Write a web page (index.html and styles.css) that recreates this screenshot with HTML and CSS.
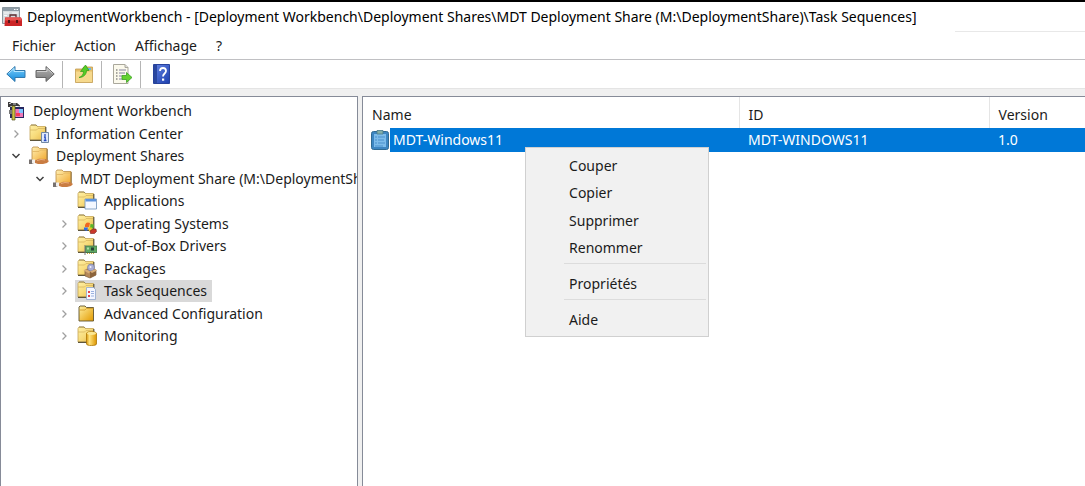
FILE: index.html
```html
<!DOCTYPE html>
<html lang="fr">
<head>
<meta charset="utf-8">
<title>DeploymentWorkbench</title>
<link rel="stylesheet" href="styles.css">
</head>
<body>
<svg class="defs" width="0" height="0" aria-hidden="true">
  <defs>
    <linearGradient id="gold" x1="0" y1="0" x2="1" y2="1"><stop offset="0" stop-color="#fff0a6"/><stop offset=".5" stop-color="#f8dc7c"/><stop offset="1" stop-color="#e8b84a"/></linearGradient>
    <linearGradient id="deep" x1="0" y1="0" x2="1" y2="1"><stop offset="0" stop-color="#fff0a0"/><stop offset="1" stop-color="#e39a00"/></linearGradient>
    <linearGradient id="amber" x1="0" y1="0" x2="1" y2="1"><stop offset="0" stop-color="#fff0b4"/><stop offset="1" stop-color="#f0a62c"/></linearGradient>
    <linearGradient id="barrel" x1="0" y1="0" x2="1" y2="0"><stop offset="0" stop-color="#d99a10"/><stop offset=".3" stop-color="#ffe27c"/><stop offset="1" stop-color="#dc9500"/></linearGradient>
    <linearGradient id="sky" x1="0" y1="0" x2="0" y2="1"><stop offset="0" stop-color="#7fd0fa"/><stop offset="1" stop-color="#1088dc"/></linearGradient>
    <linearGradient id="steel" x1="0" y1="0" x2="0" y2="1"><stop offset="0" stop-color="#b4b4b4"/><stop offset="1" stop-color="#777"/></linearGradient>
    <linearGradient id="blue" x1="0" y1="0" x2="1" y2="1"><stop offset="0" stop-color="#6484e4"/><stop offset="1" stop-color="#1c3fae"/></linearGradient>
    <symbol id="folder" viewBox="0 0 20 20"><path d="M1 2.500L2 1h5l1.500 1.500h8V16H1z" fill="url(#gold)" stroke="#c5a555" stroke-width=".8"/><path d="M1 6h6.500L9 4.500h7.500" fill="none" stroke="#d8b661" stroke-width=".8"/><path d="M16.800 3v13.300H1" fill="none" stroke="#5e563c" stroke-width="1.200"/><path d="M2 1h5l1.500 1.300" fill="none" stroke="#8b7b4c" stroke-width=".8"/></symbol>
    <symbol id="share" viewBox="0 0 20 20"><path d="M3 2.500L4 1h5l1.500 1.500H18V15H3z" fill="url(#amber)" stroke="#b98b45" stroke-width=".8"/><path d="M3.500 5.500H10L11.500 4H17.500" fill="none" stroke="#dfb35d" stroke-width=".8"/><path d="M18.200 3v11" stroke="#8e7042"/><path d="M0 13.500h3.500l1.500 3-1 1.500H0z" fill="#77716f"/><path d="M3 13.500h3l1 2.500-2 1.500H3z" fill="#f2efec"/><path d="M6 14.500l4-1.700 7 .2 3 2-2 2-4 1H9l-3-1z" fill="#c97c42"/><path d="M8 14.500l4-1 4 .5" fill="none" stroke="#e9af7c"/></symbol>
    <symbol id="chev-right" viewBox="0 0 10 10"><path d="M3.500 1.500L7 5 3.500 8.500" fill="none" stroke="#a0a0a0" stroke-width="1.300"/></symbol>
    <symbol id="chev-down" viewBox="0 0 10 10"><path d="M1.500 3L5 6.500 8.500 3" fill="none" stroke="#404040" stroke-width="1.500"/></symbol>
  </defs>
</svg>
<div class="window">
  <header class="titlebar">
    <svg class="icon20" viewBox="0 0 20 20" aria-hidden="true"><path d="M.500.500h17v16H.500z" fill="#d5dbde" stroke="#8b979e"/><path d="M1 1h16v3H1z" fill="#8e9ca6"/><path d="M12 2.500h1.500M14.500 2.500H16" stroke="#fff"/><path d="M2 6h5M2 8.500h3M10 6h6" stroke="#f8fafb"/><path d="M8 10.500V8h6v2.500" fill="none" stroke="#5b2c2e" stroke-width="1.300"/><path d="M3 10.500h16l1 2v6.500H2.500z" fill="#cb2426"/><path d="M3.500 10.500h15.500l.5 3H3z" fill="#e85550"/><path d="M6 13h2v3H6zM14 13h2v3h-2z" fill="#571417"/></svg>
    <h1 class="title">DeploymentWorkbench - [Deployment Workbench\Deployment Shares\MDT Deployment Share (M:\DeploymentShare)\Task Sequences]</h1>
  </header>
  <nav class="menubar" aria-label="Menu">
    <button type="button">Fichier</button>
    <button type="button">Action</button>
    <button type="button">Affichage</button>
    <button type="button">?</button>
    <span class="menubar-line"></span>
  </nav>
  <div class="toolbar" role="toolbar">
    <button type="button" aria-label="Précédent"><svg class="icon20" viewBox="0 0 20 20"><path d="M.800 10L9 2.500v4h10v7H9v4z" fill="url(#sky)" stroke="#3279ad" stroke-linejoin="round"/><path d="M2.500 9.500L8 4.500v3h10" fill="none" stroke="#b5e6ff"/></svg></button>
    <button type="button" aria-label="Suivant"><svg class="icon20" viewBox="0 0 20 20"><path d="M19.200 10L11 2.500v4H1v7h10v4z" fill="url(#steel)" stroke="#666" stroke-linejoin="round"/><path d="M2 7.500h10v-3l5.500 5" fill="none" stroke="#cfcfcf"/></svg></button>
    <span class="divider"></span>
    <button type="button" aria-label="Dossier parent"><svg class="icon20" viewBox="0 0 20 20"><path d="M1.500 5h7l1-2h9v15.500h-17z" fill="#e6bf69" stroke="#c39d52" stroke-width=".8"/><path d="M2 7.500h16V18H2z" fill="#f6d98d"/><path d="M11 4h6v2h-6z" fill="#69b9e8"/><path d="M5 13.500c3-1 4.500-3 4.500-6H6.500L11.500 1 15 6.500h-2.500c0 4-3 7-7.500 7z" fill="#55cc27" stroke="#319b16" stroke-width=".7"/></svg></button>
    <span class="divider"></span>
    <button type="button" aria-label="Exporter la liste"><svg class="icon20" viewBox="0 0 20 20"><path d="M.500.500H12l3 3v16H.500z" fill="#fbf9ec" stroke="#aaa89c"/><path d="M12 .500v3h3" fill="#ddd" stroke="#aaa89c"/><path d="M3 6h1.500M3 9h1.500M3 12h1.500M3 15h1.500" stroke="#555"/><path d="M6 6h7M6 9h6M6 12h3M6 15h3" stroke="#8584a2"/><path d="M9 11.500h4.500V8.500l5.500 5-5.500 5v-3H9z" fill="#63d22f" stroke="#3aa023" stroke-width=".8"/></svg></button>
    <span class="divider"></span>
    <button type="button" aria-label="Aide"><svg class="icon20" viewBox="0 0 20 20"><path d="M1.500.500h16v19h-16z" fill="url(#blue)" stroke="#27429c"/><path d="M2 1h3v18H2z" fill="#2a479f"/><path d="M8 7C8 3 14 3 14 7c0 2.500-3 2.500-3 5.500" fill="none" stroke="#fff" stroke-width="1.800"/><path d="M10 14.500h2.200v2.200H10z" fill="#fff"/></svg></button>
  </div>
  <main class="panes">
    <section class="pane tree-pane">
      <ul class="tree">
        <li class="level0"><svg class="icon20" viewBox="0 0 20 20"><path d="M3 6h14v11H3z" fill="#26265f"/><path d="M8 8h8v8H8z" fill="#ef78b8"/><path d="M12 8h4v4h-4z" fill="#7dc5ff"/><path d="M9 12h4v3H9z" fill="#f63d5a"/><path d="M1 1h2l1 1h6l3 2.500v1L10 5H4L3 6H1z" fill="#3b3b3b"/><path d="M2 2.500h2M6 3h3" stroke="#ccc"/><path d="M5 5h3v14H5z" fill="#c9c243" stroke="#55521d" stroke-width=".7"/><path d="M2 9h3v4H2z" fill="#777"/></svg><span class="label">Deployment Workbench</span></li>
        <li class="level1"><button type="button" class="toggle" aria-label="Développer"><svg viewBox="0 0 10 10"><use href="#chev-right"/></svg></button><svg class="icon20" viewBox="0 0 20 20"><use href="#folder"/><path d="M12.500 8.500h7v10h-7z" fill="#dfe9fb" stroke="#7189a6"/><path d="M16 10v2M15 13h1.200v3.500M14.800 16.500h2.700" stroke="#264bc0" stroke-width="1.300" fill="none"/></svg><span class="label">Information Center</span></li>
        <li class="level1"><button type="button" class="toggle" aria-label="Réduire"><svg viewBox="0 0 10 10"><use href="#chev-down"/></svg></button><svg class="icon20" viewBox="0 0 20 20"><use href="#share"/></svg><span class="label">Deployment Shares</span></li>
        <li class="level2"><button type="button" class="toggle" aria-label="Réduire"><svg viewBox="0 0 10 10"><use href="#chev-down"/></svg></button><svg class="icon20" viewBox="0 0 20 20"><use href="#share"/></svg><span class="label">MDT Deployment Share (M:\DeploymentShare)</span></li>
        <li class="level3"><span class="toggle"></span><svg class="icon20" viewBox="0 0 20 20"><use href="#folder"/><path d="M8 8h11.500v10H8z" fill="#f4f8ff" stroke="#6d8fb9" stroke-width=".8"/><path d="M8.500 8h10.500v2.500H8.500z" fill="#5d93dd"/></svg><span class="label">Applications</span></li>
        <li class="level3"><button type="button" class="toggle" aria-label="Développer"><svg viewBox="0 0 10 10"><use href="#chev-right"/></svg></button><svg class="icon20" viewBox="0 0 20 20"><use href="#folder"/><path d="M8 11c1-3 3-3 5-2l-1 4H8z" fill="#ef6621"/><path d="M13.500 10l3.500.5-1 4h-3z" fill="#58b52b"/><path d="M7 13.500h4l-1 3.500-3-1z" fill="#326ce0"/><path d="M12 13.500h3l-1 4h-2z" fill="#f2c71f"/><path d="M13 17l3-2h3l.5 2.500-2 2h-4z" fill="#c9382c" stroke="#79221c" stroke-width=".6"/></svg><span class="label">Operating Systems</span></li>
        <li class="level3"><button type="button" class="toggle" aria-label="Développer"><svg viewBox="0 0 10 10"><use href="#chev-right"/></svg></button><svg class="icon20" viewBox="0 0 20 20"><use href="#folder"/><path d="M8.500 10h11.500v6.500H8.500z" fill="#5fa864" stroke="#3f7247" stroke-width=".8"/><path d="M14 11.500h3v3h-3z" fill="#264336"/><path d="M10 11.500h2v2h-2z" fill="#b0dda5"/><path d="M8 9v10" stroke="#777"/><path d="M10 17.500h8" stroke="#c8a53e" stroke-dasharray="1 1"/></svg><span class="label">Out-of-Box Drivers</span></li>
        <li class="level3"><button type="button" class="toggle" aria-label="Développer"><svg viewBox="0 0 10 10"><use href="#chev-right"/></svg></button><svg class="icon20" viewBox="0 0 20 20"><use href="#folder"/><path d="M8 11l5-2 6 2v5l-6 3-5-2z" fill="#b58859" stroke="#80603e" stroke-width=".7"/><path d="M13 13l6-2v5l-6 3z" fill="#8c643c"/><circle cx="14" cy="8.500" r="3.500" fill="#a9add3" stroke="#7a7d9f" stroke-width=".7"/><path d="M6.500 11.500L8.500 10 13 12.500l-1 2zM13 12.500l5.500-2.500L20 11.500l-5 2.500z" fill="#d8ae79"/><circle cx="13.500" cy="8" r="1" fill="#f2f1ff"/></svg><span class="label">Packages</span></li>
        <li class="level3 selected"><button type="button" class="toggle" aria-label="Développer"><svg viewBox="0 0 10 10"><use href="#chev-right"/></svg></button><svg class="icon20" viewBox="0 0 20 20"><use href="#folder"/><path d="M9.500 6.500h7l2 2v10h-9z" fill="#f4f7ff" stroke="#8fa6cd" stroke-width=".8"/><path d="M11 10h2v2h-2zM11 14h2v2h-2z" fill="#e34750"/><path d="M14 10.500h3M14 12.500h3M14 15h3" stroke="#9bb2df"/></svg><span class="label">Task Sequences</span></li>
        <li class="level3"><button type="button" class="toggle" aria-label="Développer"><svg viewBox="0 0 10 10"><use href="#chev-right"/></svg></button><svg class="icon20" viewBox="0 0 20 20"><path d="M2 3l1-1h5l1.500 1.500h7V17H2z" fill="url(#deep)" stroke="#5f5430" stroke-width=".9"/><path d="M2.500 6H8l1.500-1.500h7" fill="none" stroke="#cf9b2a" stroke-width=".8"/></svg><span class="label">Advanced Configuration</span></li>
        <li class="level3"><button type="button" class="toggle" aria-label="Développer"><svg viewBox="0 0 10 10"><use href="#chev-right"/></svg></button><svg class="icon20" viewBox="0 0 20 20"><use href="#folder"/><path d="M9.500 7.500c0-2.500 10-2.500 10 0v10.500c0 2-10 2-10 0z" fill="url(#barrel)" stroke="#ac7605" stroke-width=".8"/><ellipse cx="14.500" cy="7.500" rx="4.500" ry="1.400" fill="#fbe794"/></svg><span class="label">Monitoring</span></li>
      </ul>
    </section>
    <section class="pane list-pane">
      <table class="list">
        <colgroup><col class="col-name"><col class="col-id"><col></colgroup>
        <thead><tr><th scope="col">Name</th><th scope="col">ID</th><th scope="col">Version</th></tr></thead>
        <tbody><tr>
          <td class="name-cell"><div class="name"><svg class="icon20" viewBox="0 0 20 20" aria-hidden="true"><rect x="1.500" y="1.500" width="17" height="18" rx="2" fill="#3d86c2" stroke="#2f6a92"/><path d="M4 4h12v13H4z" fill="#7dbcea"/><path d="M7 .500h6V4H7z" fill="#83afa8" stroke="#47798a" stroke-width=".8"/><path d="M5 7h2M8 7h7M5 10h2M8 10h6M5 13h2M8 13h7M5 16h8" stroke="#4a90cc"/></svg><span class="name-text">MDT-Windows11</span></div></td>
          <td>MDT-WINDOWS11</td>
          <td>1.0</td>
        </tr></tbody>
      </table>
      <div class="context-menu" role="menu">
        <button type="button" role="menuitem" class="short">Couper</button>
        <button type="button" role="menuitem">Copier</button>
        <button type="button" role="menuitem" class="short">Supprimer</button>
        <button type="button" role="menuitem">Renommer</button>
        <hr>
        <button type="button" role="menuitem">Propriétés</button>
        <hr>
        <button type="button" role="menuitem">Aide</button>
      </div>
    </section>
  </main>
</div>
</body>
</html>
```
FILE: styles.css
```css
* { box-sizing: border-box; }
body {
  margin: 0;
  background: #fff;
  color: #1b1b1b;
  font: 14px/20px "Noto Sans", "Open Sans", sans-serif;
}
button {
  margin: 0;
  padding: 0;
  border: 0;
  background: none;
  color: inherit;
  font: inherit;
}
.defs { position: absolute; }
.icon20 { display: block; flex: none; width: 20px; height: 20px; }
.window {
  display: flex;
  flex-direction: column;
  min-height: 100vh;
  border-top: 2px solid #000;
}
.titlebar {
  display: flex;
  align-items: center;
  gap: 5px;
  height: 29px;
  padding-left: 2px;
}
.title {
  margin: 0;
  color: #000;
  font-size: 14px;
  font-weight: 400;
  white-space: nowrap;
}
.menubar {
  display: flex;
  align-items: flex-start;
  gap: 19px;
  height: 29px;
  padding-left: 12px;
  border-bottom: 1px solid #c0c0c3;
}
.menubar button { height: 30px; }
.menubar-line {
  flex: 0 0 130px;
  height: 1px;
  margin-left: auto;
  background: #e8e8e8;
}
.toolbar {
  display: flex;
  align-items: center;
  height: 29px;
  padding-left: 6px;
  border-bottom: 1px solid #e4e4e4;
}
.toolbar button + button { margin-left: 9px; }
.divider { width: 1px; height: 27px; margin: 0 11px 0 7px; background: #b5b5b5; }
.panes {
  display: flex;
  flex: 1;
  gap: 4px;
  padding-top: 7px;
  background: #f0f0f0;
}
.pane { border: 1px solid #868b98; border-bottom: 0; background: #fff; }
.tree-pane { flex: 0 0 33%; overflow: hidden; }
.tree {
  display: grid;
  grid-auto-rows: 22px 23px;
  margin: 0;
  padding: 3px 0 0;
  list-style: none;
}
.tree li { display: flex; align-items: center; white-space: nowrap; }
.tree .icon20 { width: 24px; padding: 0 2px; }
.toggle { display: block; flex: none; width: 10px; height: 10px; margin-right: 6px; }
.toggle svg { display: block; width: 10px; height: 10px; }
.label { padding: 0 5px; line-height: 22px; }
.level0 { padding-left: 4px; }
.level0 .label { padding-left: 4px; }
.level1 { padding-left: 10px; }
.level2 { padding-left: 34px; }
.level3 { padding-left: 58px; }
.selected .icon20, .selected .label { height: 22px; background: #d9d9d9; }
.list-pane { position: relative; flex: 1; min-width: 0; border-right: 0; }
.list { width: 100%; border-collapse: collapse; table-layout: fixed; }
.col-name { width: 376px; }
.col-id { width: 250px; }
.list th {
  height: 31px;
  padding: 4px 9px 0;
  border-right: 1px solid #e5e5e5;
  font-weight: 400;
  text-align: left;
}
.list th:last-child { border-right: 0; }
.list td { height: 24px; padding: 0 9px; background: #0078d7; color: #fff; }
.list .name-cell { padding: 0; background: none; }
.name { display: flex; align-items: center; padding-left: 7px; }
.name-text { flex: 1; padding-left: 3px; background: #0078d7; line-height: 24px; }
.context-menu {
  position: absolute;
  top: 50px;
  left: 162px;
  display: flex;
  flex-direction: column;
  width: 184px;
  padding: 4px 2px 2px;
  border: 1px solid #d0d0d0;
  background: #f1f1f1;
}
.context-menu button { height: 28px; padding-left: 41px; text-align: left; }
.context-menu .short { height: 27px; }
.context-menu hr {
  width: 142px;
  height: 1px;
  margin: 1px 0 6px 36px;
  border: 0;
  background: #dcdcdc;
}
```
